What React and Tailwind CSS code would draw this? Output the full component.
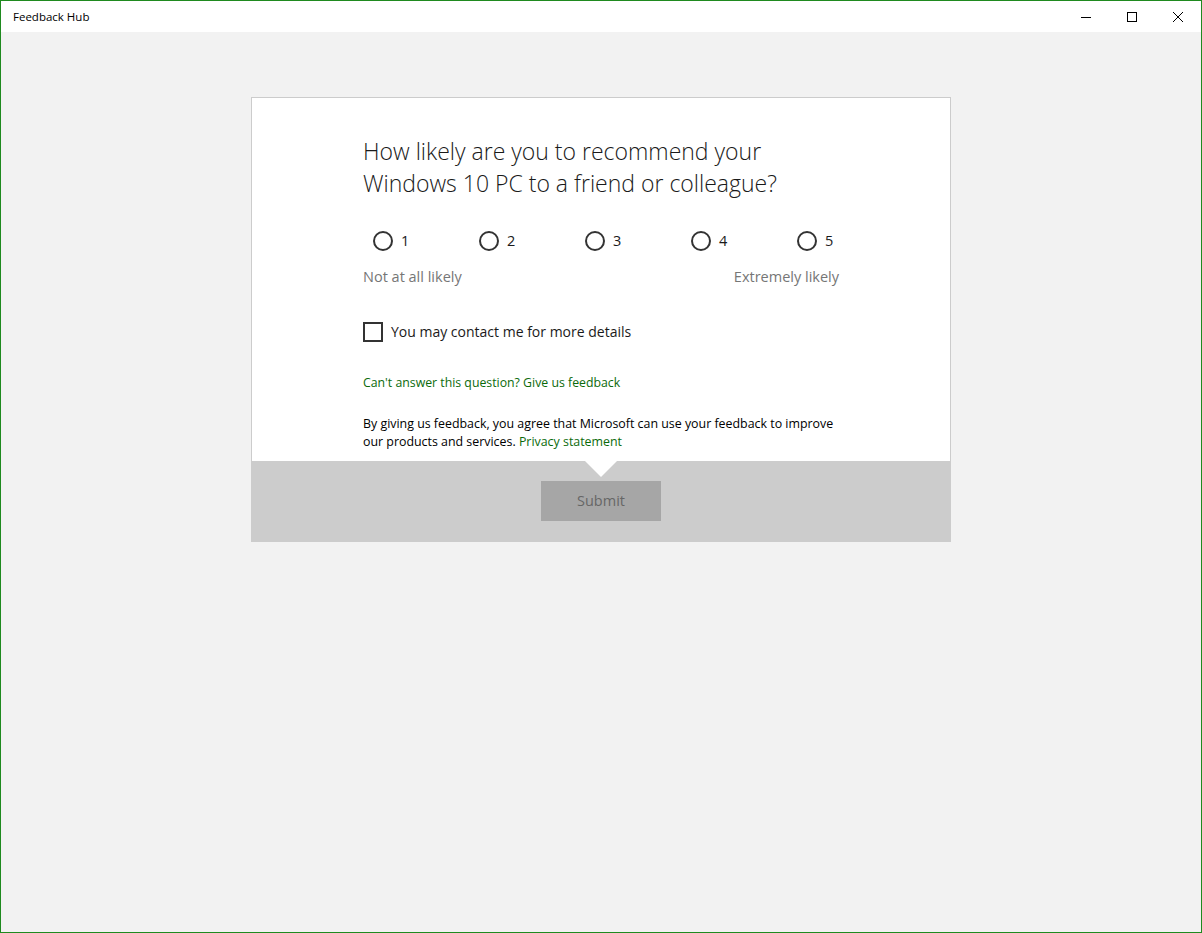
import React from "react";

const font = { fontFamily: '"Open Sans", "Noto Sans", "Liberation Sans", sans-serif' };

function Radio({ n }) {
  return (
    <div className="flex items-center shrink-0 w-[106px] pl-[10px]">
      <span className="block w-[20px] h-[20px] rounded-full border-2 border-[#333333] box-border" />
      <span className="ml-[8px] text-[14.5px] text-[#1a1a1a] leading-[20px]">{n}</span>
    </div>
  );
}

export default function App() {
  return (
    <div className="w-[1202px] h-[933px] border border-[#1f8a1f] bg-[#f2f2f2] flex flex-col box-border" style={font}>
      <div className="h-[31px] bg-white flex items-center justify-between shrink-0">
        <span className="ml-[12px] text-[11.5px] text-black">Feedback Hub</span>
        <div className="flex h-full">
          <div className="w-[46px] h-full flex items-center justify-center">
            <svg width="10" height="10" viewBox="0 0 10 10"><path d="M0 5.5h10" stroke="#000" strokeWidth="1" /></svg>
          </div>
          <div className="w-[46px] h-full flex items-center justify-center">
            <svg width="10" height="10" viewBox="0 0 10 10"><rect x="0.5" y="0.5" width="9" height="9" fill="none" stroke="#000" strokeWidth="1" /></svg>
          </div>
          <div className="w-[46px] h-full flex items-center justify-center">
            <svg width="10" height="10" viewBox="0 0 10 10"><path d="M0 0L10 10M10 0L0 10" stroke="#000" strokeWidth="1" /></svg>
          </div>
        </div>
      </div>
      <div className="flex justify-center pt-[65px]">
        <div className="w-[700px] flex flex-col">
          <div className="bg-white border border-b-0 border-[#cccccc] pl-[111px] pr-[111px] pt-[37px] pb-[10px]">
            <h1 className="text-[23px] leading-[32px] font-light text-[#1a1a1a] w-[440px]">
              How likely are you to recommend your Windows 10 PC to a friend or colleague?
            </h1>
            <div className="flex mt-[32px] w-[476px] overflow-visible">
              {[1, 2, 3, 4, 5].map((n) => (
                <Radio key={n} n={n} />
              ))}
            </div>
            <div className="flex justify-between mt-[16px] text-[14.5px] leading-[20px] text-[#767676] w-[476px]">
              <span>Not at all likely</span>
              <span>Extremely likely</span>
            </div>
            <label className="flex items-center mt-[35px] h-[20px]">
              <span className="block w-[20px] h-[20px] border-2 border-[#333333] box-border shrink-0" />
              <span className="ml-[8px] text-[14px] leading-[20px] text-[#1a1a1a]">You may contact me for more details</span>
            </label>
            <div className="mt-[32px] text-[12.3px] leading-[18px] text-[#0b6a0b]">Can't answer this question? Give us feedback</div>
            <p className="mt-[23px] text-[12.4px] leading-[18px] text-black w-[480px]">
              By giving us feedback, you agree that Microsoft can use your feedback to improve our products and services.{" "}
              <span className="text-[#0b6a0b]">Privacy statement</span>
            </p>
          </div>
          <div className="bg-[#cccccc] h-[81px] relative flex justify-center items-start pt-[20px]">
            <svg className="absolute left-[334px] top-0" width="32" height="16" viewBox="0 0 32 16">
              <path d="M0 0H32L16 16Z" fill="#ffffff" />
            </svg>
            <button className="w-[120px] h-[40px] bg-[#a6a6a6] text-[14.5px] text-[#666666]">Submit</button>
          </div>
        </div>
      </div>
    </div>
  );
}
